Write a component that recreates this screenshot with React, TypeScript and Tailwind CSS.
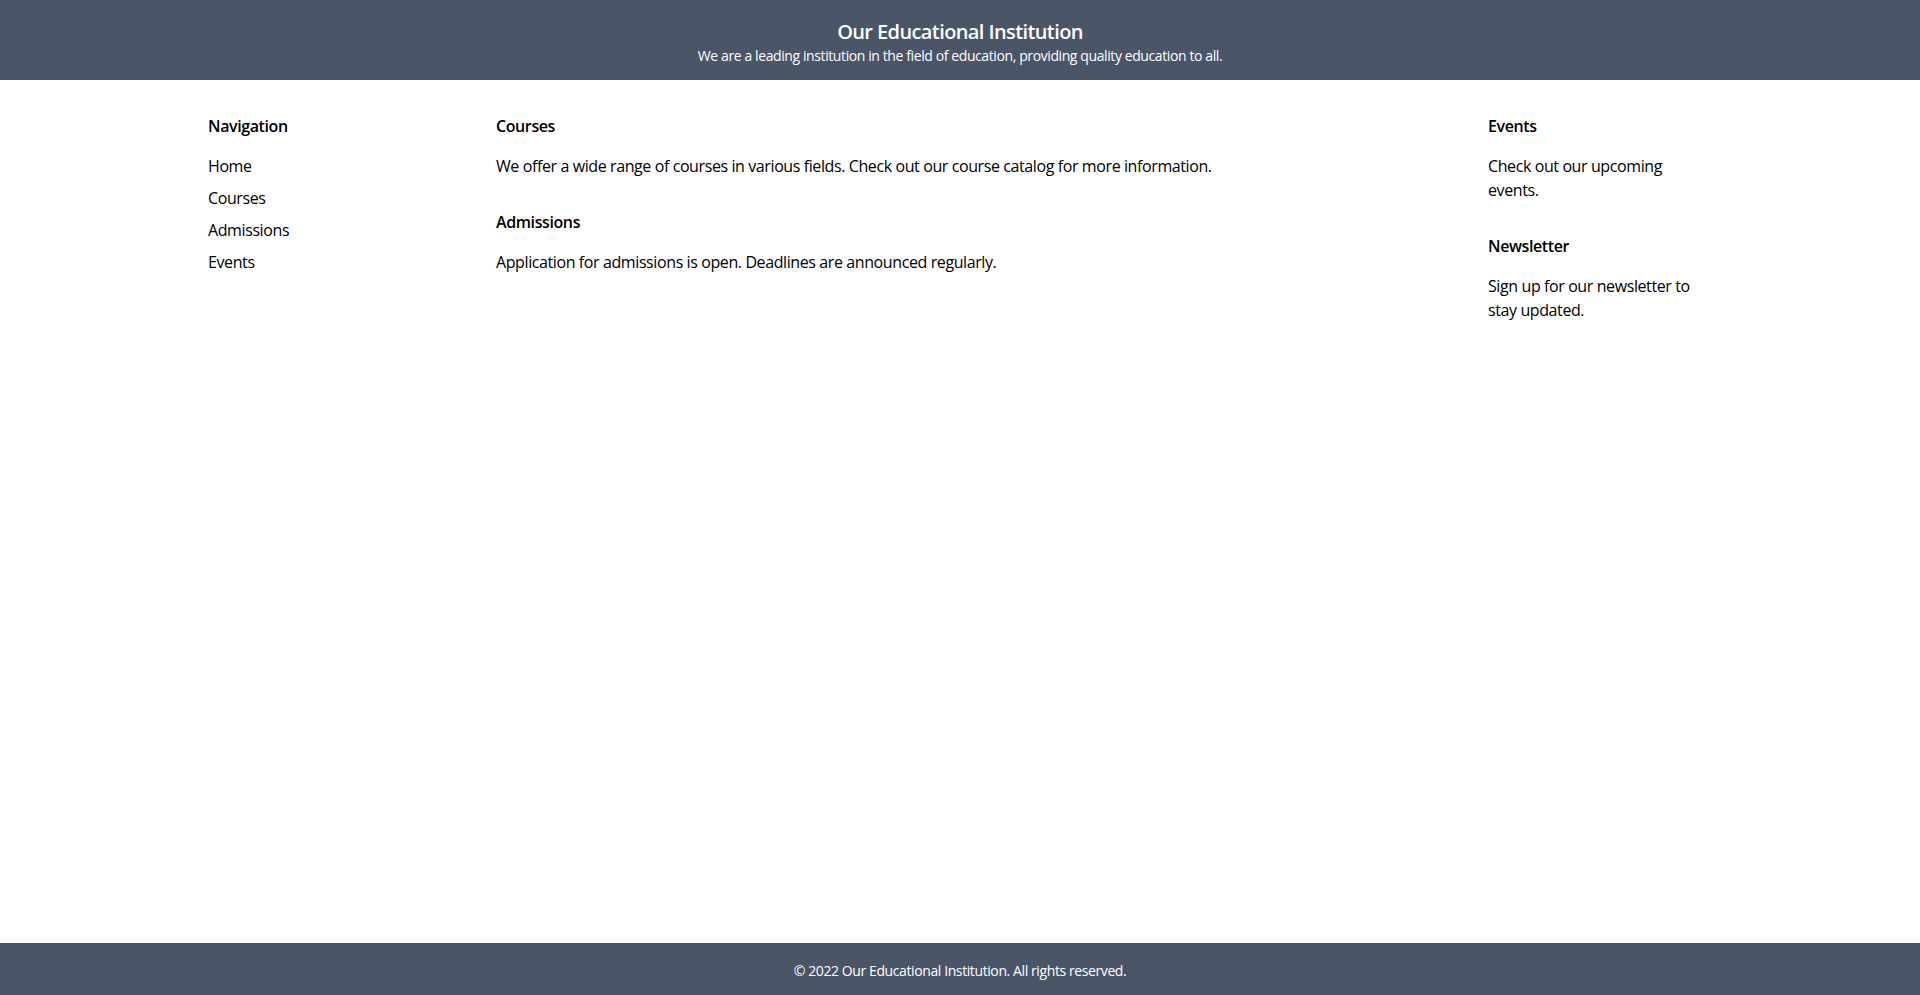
import React from 'react';

const navLinks = ['Home', 'Courses', 'Admissions', 'Events'];

const App: React.FC = () => {
  return (
    <div className="min-h-screen flex flex-col bg-white text-black tracking-tight font-['Open_Sans',sans-serif]">
      <header className="bg-[#4a5568] text-white pt-[18px] pb-[14px] text-center">
        <h1 className="text-xl font-semibold tracking-[-0.03em]">Our Educational Institution</h1>
        <p className="text-sm">We are a leading institution in the field of education, providing quality education to all.</p>
      </header>

      <main className="flex-1 container mx-auto px-4 pt-[34px] pb-8 flex gap-8">
        <aside className="w-64 shrink-0">
          <h2 className="font-semibold mb-4">Navigation</h2>
          <ul>
            {navLinks.map((link) => (
              <li key={link} className="mb-2">
                <a href="#">{link}</a>
              </li>
            ))}
          </ul>
        </aside>

        <section className="flex-1">
          <div className="mb-8">
            <h2 className="font-semibold mb-4">Courses</h2>
            <p>We offer a wide range of courses in various fields. Check out our course catalog for more information.</p>
          </div>
          <div className="mb-8">
            <h2 className="font-semibold mb-4">Admissions</h2>
            <p>Application for admissions is open. Deadlines are announced regularly.</p>
          </div>
        </section>

        <aside className="w-56 shrink-0">
          <div className="mb-8">
            <h2 className="font-semibold mb-4">Events</h2>
            <p>Check out our upcoming events.</p>
          </div>
          <div className="mb-8">
            <h2 className="font-semibold mb-4">Newsletter</h2>
            <p>Sign up for our newsletter to stay updated.</p>
          </div>
        </aside>
      </main>

      <footer className="bg-[#4a5568] text-white pt-[18px] pb-[14px] text-center">
        <p className="text-sm">&copy; 2022 Our Educational Institution. All rights reserved.</p>
      </footer>
    </div>
  );
};

export default App;
